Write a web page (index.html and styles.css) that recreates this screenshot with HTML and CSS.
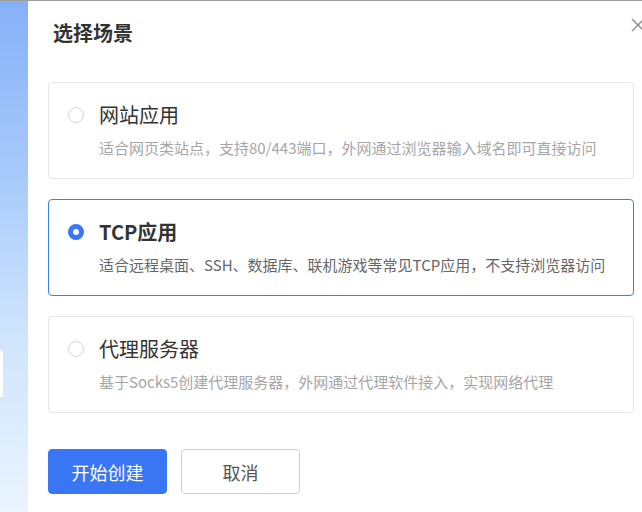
FILE: index.html
```html
<!DOCTYPE html>
<html lang="zh">
<head>
<meta charset="utf-8">
<link rel="stylesheet" href="styles.css">
</head>
<body>
<div class="page">
  <div class="side">
    <div class="side-panel"></div>
  </div>
  <div class="dialog">
    <button class="close" aria-label="关闭">
      <svg width="14" height="14" viewBox="0 0 14 14"><path d="M1 1L13 13M13 1L1 13" stroke="#8a8a8a" stroke-width="1.4" fill="none"/></svg>
    </button>
    <h1 class="title">选择场景</h1>
    <div class="options">
      <div class="option">
        <div class="option-head">
          <span class="radio"></span>
          <span class="option-name">网站应用</span>
        </div>
        <div class="option-desc">适合网页类站点，支持80/443端口，外网通过浏览器输入域名即可直接访问</div>
      </div>
      <div class="option selected">
        <div class="option-head">
          <span class="radio"></span>
          <span class="option-name">TCP应用</span>
        </div>
        <div class="option-desc">适合远程桌面、SSH、数据库、联机游戏等常见TCP应用，不支持浏览器访问</div>
      </div>
      <div class="option">
        <div class="option-head">
          <span class="radio"></span>
          <span class="option-name">代理服务器</span>
        </div>
        <div class="option-desc">基于Socks5创建代理服务器，外网通过代理软件接入，实现网络代理</div>
      </div>
    </div>
    <div class="actions">
      <button class="btn btn-primary">开始创建</button>
      <button class="btn btn-default">取消</button>
    </div>
  </div>
</div>
</body>
</html>
```
FILE: styles.css
```css
html, body {
  margin: 0;
  padding: 0;
  width: 642px;
  height: 512px;
  overflow: hidden;
  background: #fff;
  font-family: "Noto Sans CJK SC", "Noto Sans", sans-serif;
}

.page {
  display: flex;
  height: 512px;
  border-top: 1px solid #9c9c9c;
  box-sizing: border-box;
}

.side {
  width: 28px;
  flex: none;
  background: linear-gradient(180deg, #86b1f7 0%, #a9cbfb 35%, #cfe4fd 65%, #eaf4fe 100%);
  overflow: hidden;
}

.side-panel {
  margin-top: 349px;
  width: 3px;
  height: 47px;
  background: #fff;
  border-radius: 0 4px 4px 0;
}

.dialog {
  position: relative;
  flex: 1;
  background: #fff;
  padding: 20px 0 0 20px;
  overflow: hidden;
}

.close {
  position: absolute;
  top: 17px;
  right: -3px;
  padding: 0;
  border: 0;
  background: none;
  width: 14px;
  height: 14px;
  line-height: 0;
}

.title {
  margin: 0 0 0 5px;
  font-size: 20px;
  line-height: 24px;
  font-weight: 700;
  color: #333;
}

.options {
  display: flex;
  flex-direction: column;
  gap: 20px;
  margin-top: 37px;
  width: 586px;
}

.option {
  border: 1px solid #e6e6e6;
  border-radius: 4px;
  padding: 20px 19px 19px 19px;
  height: 97px;
  box-sizing: border-box;
}

.option.selected {
  border-color: #3d7cf3;
}

.option-head {
  display: flex;
  align-items: center;
  gap: 15px;
  height: 24px;
}

.radio {
  width: 16px;
  height: 16px;
  box-sizing: border-box;
  border: 1px solid #d6d6d6;
  border-radius: 50%;
  background: #fff;
  flex: none;
}

.selected .radio {
  border: 5px solid #3a76f5;
  background: #fff;
}

.option-name {
  font-size: 20px;
  line-height: 24px;
  color: #333;
}

.selected .option-name {
  font-weight: 700;
}

.option-desc {
  margin-top: 10px;
  padding-left: 31px;
  font-size: 15px;
  line-height: 22px;
  color: #a6a6a6;
  white-space: nowrap;
}

.selected .option-desc {
  color: #666;
}

.actions {
  display: flex;
  gap: 14px;
  margin-top: 36px;
}

.btn {
  width: 119px;
  height: 45px;
  border-radius: 4px;
  font-family: inherit;
  font-size: 18px;
  padding: 0;
  box-sizing: border-box;
  cursor: pointer;
}

.btn-primary {
  background: #3a75f4;
  border: 1px solid #3a75f4;
  color: #fff;
}

.btn-default {
  background: #fff;
  border: 1px solid #cfcfcf;
  color: #555;
}
```
